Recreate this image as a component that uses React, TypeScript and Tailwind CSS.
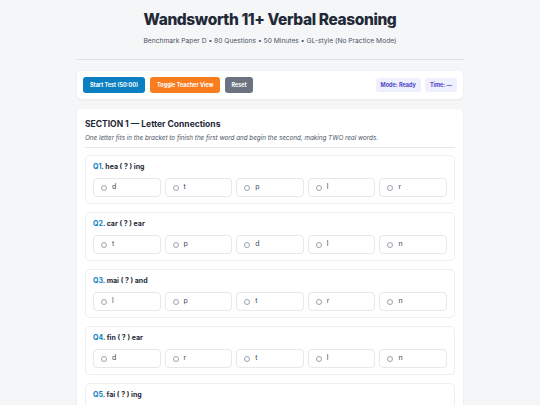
import React from "react";

const questions = [
  { n: 1, q: "hea ( ? ) ing", opts: ["d", "t", "p", "l", "r"] },
  { n: 2, q: "car ( ? ) ear", opts: ["t", "p", "d", "l", "n"] },
  { n: 3, q: "mai ( ? ) and", opts: ["l", "p", "t", "r", "n"] },
  { n: 4, q: "fin ( ? ) ear", opts: ["d", "r", "t", "l", "n"] },
  { n: 5, q: "fai ( ? ) ing", opts: ["d", "t", "p", "l", "r"] },
];

export default function App() {
  return (
    <div
      className="h-[405px] overflow-hidden bg-[#f5f6f8] text-[#1f2937]"
      style={{ fontFamily: "Inter, 'Noto Sans', sans-serif" }}
    >
      <div className="mx-auto w-[388px] pt-[10px]">
        <header className="flex flex-col items-center border-b border-[#dfe2e7] pb-[13px]">
          <h1 className="text-[15.5px] font-extrabold leading-[20px] tracking-[-0.025em] text-[#1f2937]">
            Wandsworth 11+ Verbal Reasoning
          </h1>
          <p className="mt-[6px] text-[6.7px] leading-[10px] text-[#4b5563]">
            Benchmark Paper D • 80 Questions • 50 Minutes • GL-style (No Practice Mode)
          </p>
        </header>

        <div className="mx-[1px] mt-[11px] flex items-center justify-between rounded-[5px] bg-white px-[6px] py-[6px] shadow-[0_1px_3px_rgba(0,0,0,0.06)]">
          <div className="flex items-center gap-[5px]">
            <button className="h-[16px] rounded-[3px] bg-[#0a7fc2] px-[7px] text-[5.5px] font-bold text-white">
              Start Test (50:00)
            </button>
            <button className="h-[16px] rounded-[3px] bg-[#f97c1f] px-[7px] text-[5.5px] font-bold text-white">
              Toggle Teacher View
            </button>
            <button className="h-[16px] rounded-[3px] bg-[#6b7280] px-[6px] text-[5.5px] font-bold text-white">
              Reset
            </button>
          </div>
          <div className="flex items-center gap-[4px]">
            <span className="rounded-[3px] bg-[#eef0fe] px-[5px] py-[3px] text-[5.5px] font-bold text-[#4f46c5]">
              Mode: Ready
            </span>
            <span className="rounded-[3px] bg-[#eef0fe] px-[5px] py-[3px] text-[5.5px] font-bold text-[#4f46c5]">
              Time: —
            </span>
          </div>
        </div>

        <section className="mx-[1px] mt-[10px] rounded-[5px] bg-white px-[8px] pt-[9px] shadow-[0_1px_3px_rgba(0,0,0,0.06)]">
          <h2 className="text-[8.5px] font-bold leading-[12px] text-[#1f2937]">
            SECTION 1 — Letter Connections
          </h2>
          <p className="mt-[3px] border-b border-[#e5e7eb] pb-[4px] text-[6.3px] italic leading-[10px] text-[#4b5563]">
            One letter fits in the bracket to finish the first word and begin the second, making TWO real words.
          </p>
          <div className="mt-[7px] flex flex-col gap-[8px]">
            {questions.map((q) => (
              <div
                key={q.n}
                className="rounded-[5px] border border-[#eceef1] px-[7px] pb-[6px] pt-[6px]"
              >
                <div className="text-[7px] font-bold leading-[10px] text-[#1f2937]">
                  <span className="text-[#0a7fc2]">Q{q.n}.</span> {q.q}
                </div>
                <div className="mt-[6px] grid grid-cols-5 gap-[4px]">
                  {q.opts.map((o, i) => (
                    <div
                      key={i}
                      className="flex h-[19px] items-center gap-[5px] rounded-[4px] border border-[#e6e8eb] bg-white pl-[7px]"
                    >
                      <span className="h-[6px] w-[6px] rounded-full border border-[#9ca3af]" />
                      <span className="text-[7px] text-[#374151]">{o}</span>
                    </div>
                  ))}
                </div>
              </div>
            ))}
          </div>
        </section>
      </div>
    </div>
  );
}
